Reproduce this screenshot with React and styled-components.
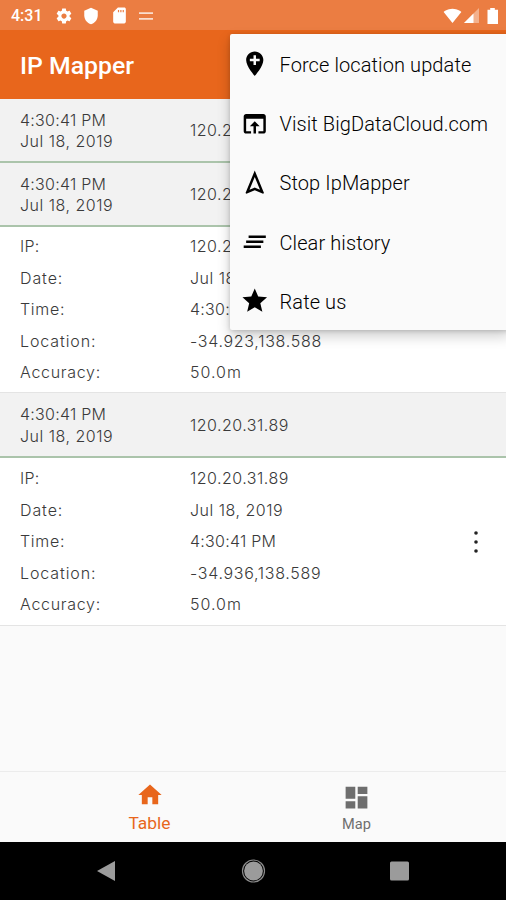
import React from 'react';
import styled, { createGlobalStyle } from 'styled-components';

const GlobalStyle = createGlobalStyle`
  * { box-sizing: border-box; }
  body { margin: 0; background: #fafafa; }
`;

const Screen = styled.div`
  width: 506px;
  height: 900px;
  display: flex;
  flex-direction: column;
  position: relative;
  overflow: hidden;
  background: #fafafa;
  font-family: Roboto, sans-serif;
`;

const StatusBar = styled.header`
  height: 30px;
  flex: none;
  display: flex;
  align-items: center;
  justify-content: space-between;
  padding: 1px 5px 0 11px;
  background: #eb7d42;
  color: #fff;
`;

const StatusGroup = styled.div`
  display: flex;
  align-items: center;
  gap: ${(p) => p.$gap}px;
`;

const Clock = styled.span`
  width: 32px;
  margin-right: 2px;
  font-size: 16px;
  font-weight: 500;
  line-height: 20px;
`;

const AppBar = styled.div`
  height: 69px;
  flex: none;
  display: flex;
  align-items: center;
  padding: 3px 20px 0;
  background: #e8661c;
`;

const Title = styled.h1`
  margin: 0;
  color: #fff;
  font-size: 24.8px;
  font-weight: 500;
  line-height: 30px;
`;

const History = styled.main`
  flex: 1;
  min-height: 0;
`;

const Text = styled.span`
  font-family: Inter, sans-serif;
  font-size: 16px;
  font-weight: 300;
  letter-spacing: ${(p) => p.$track || 0}px;
  line-height: 21.5px;
  color: #3a3a3a;
  white-space: nowrap;
`;

const Summary = styled.div`
  height: ${(p) => p.$height}px;
  display: grid;
  grid-template-columns: 170px 1fr;
  align-items: center;
  padding: 2px 20px 0;
  background: #f2f2f2;
  border-bottom: 2px solid #abc4ab;
`;

const Stamp = styled.div`
  display: flex;
  flex-direction: column;
`;

const Details = styled.div`
  height: ${(p) => p.$height}px;
  display: flex;
  align-items: center;
  justify-content: space-between;
  padding: 1px 19px 0 20px;
  background: #fff;
  border-bottom: 1px solid #e4e4e4;
`;

const Fields = styled.div`
  display: grid;
  grid-template-columns: 170px 1fr;
  grid-auto-rows: 31.4px;
  align-items: center;
`;

const MoreButton = styled.button`
  width: 22px;
  height: 30px;
  padding: 0;
  border: 0;
  background: none;
  display: grid;
  place-items: center;
`;

const Menu = styled.nav`
  position: absolute;
  top: 34px;
  left: 230px;
  width: 280px;
  height: 296px;
  display: flex;
  flex-direction: column;
  background: #fafafa;
  border-radius: 2px;
  box-shadow: 0 6px 14px rgba(0, 0, 0, 0.2), 0 1px 4px rgba(0, 0, 0, 0.16);
`;

const MenuItem = styled.a`
  height: 59.2px;
  display: flex;
  align-items: center;
  gap: 10px;
  padding: 1px 0 0 10px;
  color: #000;
  white-space: nowrap;
`;

const MenuLabel = styled.span`
  padding-top: 2px;
  font-size: 20px;
  font-weight: 300;
  letter-spacing: ${(p) => p.$track}px;
`;

const Tabs = styled.nav`
  height: 71px;
  flex: none;
  display: grid;
  grid-template-columns: 207px 207px;
  justify-content: center;
  border-top: 1px solid #ececec;
  background: #fafafa;
`;

const Tab = styled.a`
  display: flex;
  flex-direction: column;
  align-items: center;
  padding-top: ${(p) => (p.$active ? 9 : 11)}px;
  color: ${(p) => (p.$active ? '#e8661c' : '#6e6e6e')};
  font-size: ${(p) => (p.$active ? 17.4 : 14.6)}px;
  line-height: ${(p) => (p.$active ? 28 : 25)}px;
`;

const SystemBar = styled.footer`
  height: 58px;
  flex: none;
  display: grid;
  grid-template-columns: repeat(3, 146.5px);
  justify-content: center;
  align-items: center;
  justify-items: center;
  background: #000;
`;

const paths = {
  pin: 'M12 2C8.14 2 5 5.14 5 9c0 5.25 7 13 7 13s7-7.75 7-13c0-3.86-3.14-7-7-7zm4 8h-3v3h-2v-3H8V8h3V5h2v3h3v2z',
  browser: 'M19 4H5c-1.11 0-2 .9-2 2v12c0 1.1.89 2 2 2h4v-2H5V8h14v10h-4v2h4c1.1 0 2-.9 2-2V6c0-1.1-.89-2-2-2zm-7 6l-4 4h3v6h2v-6h3l-4-4z',
  stop: 'M12 7.27l4.28 10.43-3.47-1.53-.81-.36-.81.36-3.47 1.53L12 7.27M12 2L4.5 20.29l.71.71L12 18l6.79 3 .71-.71L12 2z',
  clear: 'M5 13h14v-2H5v2zm-2 4h14v-2H3v2zM7 7v2h14V7H7z',
  star: 'M12 17.27L18.18 21l-1.64-7.03L22 9.24l-7.19-.61L12 2 9.19 8.63 2 9.24l5.46 4.73L5.82 21z',
  home: 'M10 20v-6h4v6h5v-8h3L12 3 2 12h3v8z',
  dashboard: 'M3 13h8V3H3v10zm0 8h8v-6H3v6zm10 0h8V11h-8v10zm0-18v6h8V3h-8z',
  gear: 'M19.43 12.98c.04-.32.07-.64.07-.98s-.03-.66-.07-.98l2.11-1.65c.19-.15.24-.42.12-.64l-2-3.46c-.12-.22-.39-.3-.61-.22l-2.49 1c-.52-.4-1.08-.73-1.69-.98l-.38-2.65C14.46 2.18 14.25 2 14 2h-4c-.25 0-.46.18-.49.42l-.38 2.65c-.61.25-1.17.59-1.69.98l-2.49-1c-.23-.09-.49 0-.61.22l-2 3.46c-.13.22-.07.49.12.64l2.11 1.65c-.04.32-.07.65-.07.98s.03.66.07.98l-2.11 1.65c-.19.15-.24.42-.12.64l2 3.46c.12.22.39.3.61.22l2.49-1c.52.4 1.08.73 1.69.98l.38 2.65c.03.24.24.42.49.42h4c.25 0 .46-.18.49-.42l.38-2.65c.61-.25 1.17-.59 1.69-.98l2.49 1c.23.09.49 0 .61-.22l2-3.46c.12-.22.07-.49-.12-.64l-2.11-1.65zM12 15.5c-1.93 0-3.5-1.57-3.5-3.5s1.57-3.5 3.5-3.5 3.5 1.57 3.5 3.5-1.57 3.5-3.5 3.5z',
  shield: 'M12 1L3 5v6c0 5.55 3.84 10.74 9 12 5.16-1.26 9-6.45 9-12V5l-9-4z',
  card: 'M18 2h-8L4.02 8 4 20c0 1.1.9 2 2 2h12c1.1 0 2-.9 2-2V4c0-1.1-.9-2-2-2zM11.5 5v3H10V5h1.5zm3 0v3H13V5h1.5zm3 0v3H16V5h1.5z',
  wifi: 'M12 21.5L.8 7.5C1.2 7.2 5.5 3.5 12 3.5s10.8 3.7 11.2 4L12 21.5z',
};

function Icon({ name, size }) {
  return (
    <svg width={size} height={size} viewBox="0 0 24 24" fill="currentColor" aria-hidden="true">
      <path d={paths[name]} />
    </svg>
  );
}

const menuItems = [
  { icon: 'pin', label: 'Force location update', track: 0.1 },
  { icon: 'browser', label: 'Visit BigDataCloud.com', track: 0.1 },
  { icon: 'stop', label: 'Stop IpMapper', track: 0.1 },
  { icon: 'clear', label: 'Clear history', track: 0.1 },
  { icon: 'star', label: 'Rate us', track: 0.1 },
];

const TIME = '4:30:41 PM';
const DATE = 'Jul 18, 2019';
const ADDRESS = '120.20.31.89';

function SummaryRow({ height }) {
  return (
    <Summary $height={height}>
      <Stamp>
        <Text $track={0.25}>{TIME}</Text>
        <Text $track={0.5}>{DATE}</Text>
      </Stamp>
      <Text $track={0.48}>{ADDRESS}</Text>
    </Summary>
  );
}

function DetailBlock({ height, location, more }) {
  const fields = [
    ['IP:', ADDRESS, 0.3, 0.48],
    ['Date:', DATE, 0.9, 0.5],
    ['Time:', TIME, 0.7, 0.25],
    ['Location:', location, 0.9, 0.7],
    ['Accuracy:', '50.0m', 0.7, 1],
  ];
  return (
    <Details $height={height}>
      <Fields>
        {fields.map(([label, value, labelTrack, valueTrack]) => (
          <React.Fragment key={label}>
            <Text $track={labelTrack}>{label}</Text>
            <Text $track={valueTrack}>{value}</Text>
          </React.Fragment>
        ))}
      </Fields>
      {more && (
        <MoreButton aria-label="More">
          <svg width="6" height="24" viewBox="0 0 6 24" fill="#222">
            <circle cx="3" cy="3" r="1.8" />
            <circle cx="3" cy="12" r="1.8" />
            <circle cx="3" cy="21" r="1.8" />
          </svg>
        </MoreButton>
      )}
    </Details>
  );
}

export default function App() {
  return (
    <>
      <GlobalStyle />
      <Screen>
        <StatusBar>
          <StatusGroup $gap={9.5}>
            <Clock>4:31</Clock>
            <Icon name="gear" size={18} />
            <Icon name="shield" size={18} />
            <Icon name="card" size={19} />
            <svg width="16" height="12" viewBox="0 0 16 12" stroke="#fff" strokeOpacity=".75">
              <path d="M1 3.2h14M1 8.8h14" strokeWidth="1.8" />
            </svg>
          </StatusGroup>
          <StatusGroup $gap={2}>
            <Icon name="wifi" size={19} />
            <svg width="15" height="15" viewBox="0 0 15 15" fill="#fff">
              <path d="M0 15L15 0v15z" fillOpacity=".4" />
              <path d="M0 15L9.5 5.5V15z" />
            </svg>
            <svg width="20" height="18" viewBox="0 0 20 18" fill="#fff">
              <path d="M9.2 1h4.6v1.8H17V17H6.500V2.800h2.700z" />
            </svg>
          </StatusGroup>
        </StatusBar>
        <AppBar>
          <Title>IP Mapper</Title>
        </AppBar>
        <History>
          <SummaryRow height={64} />
          <SummaryRow height={64} />
          <DetailBlock height={166} location="-34.923,138.588" />
          <SummaryRow height={65} />
          <DetailBlock height={168} location="-34.936,138.589" more />
        </History>
        <Tabs>
          <Tab $active>
            <Icon name="home" size={28} />
            <span>Table</span>
          </Tab>
          <Tab>
            <Icon name="dashboard" size={29} />
            <span>Map</span>
          </Tab>
        </Tabs>
        <SystemBar>
          <svg width="22" height="22" viewBox="0 0 22 22" fill="#9b9b9b">
            <path d="M19 1v20L1 11z" />
          </svg>
          <svg width="26" height="26" viewBox="0 0 26 26" fill="#9b9b9b">
            <circle cx="13.500" cy="13" r="9.400" />
            <circle cx="13.500" cy="13" r="11" fill="none" stroke="#8b8b8b" strokeWidth="1.200" />
          </svg>
          <svg width="20" height="20" viewBox="0 0 20 20" fill="#9b9b9b">
            <rect x="0" y="0.500" width="19" height="19" rx="1.500" />
          </svg>
        </SystemBar>
        <Menu>
          {menuItems.map((item) => (
            <MenuItem key={item.icon}>
              <Icon name={item.icon} size={29.5} />
              <MenuLabel $track={item.track}>{item.label}</MenuLabel>
            </MenuItem>
          ))}
        </Menu>
      </Screen>
    </>
  );
}
